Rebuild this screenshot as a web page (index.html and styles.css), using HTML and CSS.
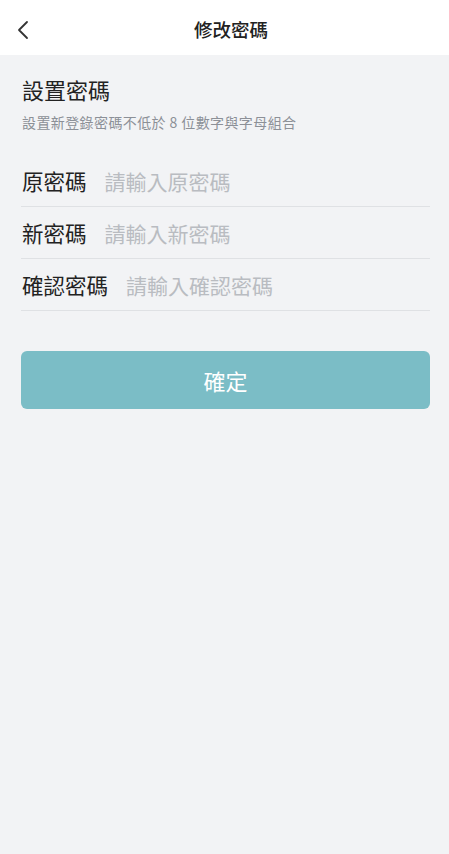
FILE: index.html
```html
<!DOCTYPE html>
<html lang="zh-Hant">
  <head>
    <meta charset="UTF-8" />
    <meta name="viewport" content="width=device-width, initial-scale=1.0" />
    <title>修改密碼</title>
    <link rel="stylesheet" href="styles.css">
  </head>
  <body>
    <div class="header">
      <a class="back" href="#">
        <svg width="14" height="20" viewBox="0 0 14 20">
          <path d="M11 2 L3 10 L11 18" fill="none" stroke="#333" stroke-width="1.8" stroke-linecap="round" stroke-linejoin="round" />
        </svg>
      </a>
      <h1>修改密碼</h1>
    </div>

    <div class="content">
      <h2>設置密碼</h2>
      <p class="hint">設置新登錄密碼不低於 8 位數字與字母組合</p>

      <form class="pwd-form">
        <div class="row">
          <label for="oldPwd">原密碼</label>
          <input type="password" id="oldPwd" placeholder="請輸入原密碼" />
        </div>
        <div class="row">
          <label for="newPwd">新密碼</label>
          <input type="password" id="newPwd" placeholder="請輸入新密碼" />
        </div>
        <div class="row">
          <label for="confirmPwd">確認密碼</label>
          <input type="password" id="confirmPwd" placeholder="請輸入確認密碼" />
        </div>

        <button type="submit">確定</button>
      </form>
    </div>
  </body>
</html>
```

FILE: styles.css
```css
* {
  margin: 0;
  padding: 0;
  box-sizing: border-box;
  font-family: "Noto Sans CJK TC", "Noto Sans", sans-serif;
}

body {
  background-color: #f2f3f5;
  color: #222;
  min-height: 100vh;
}

.header {
  position: relative;
  height: 55px;
  background-color: #ffffff;
  display: flex;
  align-items: center;
  justify-content: center;
}

.back {
  position: absolute;
  left: 16px;
  top: 20px;
  display: flex;
}

.header h1 {
  font-size: 18.5px;
  font-weight: 500;
  color: #222;
  margin-left: 13px;
  margin-top: 2px;
}

.content {
  padding: 19px 19px 0 21px;
}

h2 {
  font-size: 22px;
  font-weight: 400;
  color: #222;
  line-height: 30px;
  padding-left: 1px;
}

.hint {
  font-size: 14px;
  letter-spacing: 0.4px;
  color: #8c9097;
  margin-top: 8px;
  line-height: 20px;
  padding-left: 1px;
}

.pwd-form {
  margin-top: 23px;
}

.row {
  display: flex;
  align-items: center;
  height: 52px;
  border-bottom: 1px solid #dfe1e4;
}

.row label {
  font-size: 21.5px;
  color: #222;
  margin-right: 18px;
  padding-left: 1px;
  white-space: nowrap;
}

.row input {
  flex: 1;
  min-width: 0;
  border: none;
  outline: none;
  background: transparent;
  font-size: 21px;
  color: #222;
}

.row input::placeholder {
  color: #b9bcc1;
}

button {
  width: 100%;
  height: 58px;
  margin-top: 40px;
  background-color: #7bbdc6;
  color: #ffffff;
  border: none;
  border-radius: 6px;
  font-size: 22px;
  cursor: pointer;
}
```
